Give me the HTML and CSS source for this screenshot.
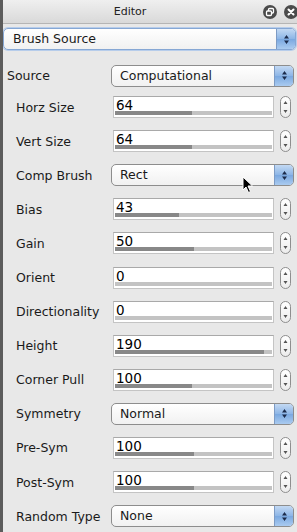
FILE: index.html
```html
<!DOCTYPE html>
<html lang="en">
<head>
  <meta charset="UTF-8" />
  <title>Editor</title>
  <link rel="stylesheet" href="styles.css">
</head>
<body>

<div class="window">
  <div class="titlebar">
    <span class="title">Editor</span>
    <div class="title-icons">
      <svg width="14" height="14" viewBox="0 0 14 14">
        <circle cx="7" cy="7" r="7" fill="#4b4b4b"/>
        <rect x="5.5" y="3.5" width="5" height="4.5" rx="1" fill="none" stroke="#fff" stroke-width="1.3"/>
        <rect x="3.5" y="6" width="5" height="4.5" rx="1" fill="#4b4b4b" stroke="#fff" stroke-width="1.3"/>
      </svg>
      <svg width="14" height="14" viewBox="0 0 14 14">
        <circle cx="7" cy="7" r="7" fill="#4b4b4b"/>
        <path d="M4.5 4.5 L9.5 9.5 M9.5 4.5 L4.5 9.5" stroke="#fff" stroke-width="2" stroke-linecap="round"/>
      </svg>
    </div>
  </div>

  <div class="top">
    <div class="combo focus">
      <span class="combo-text">Brush Source</span>
      <span class="combo-btn">
        <svg width="7" height="11" viewBox="0 0 7 11"><path d="M3.5 1 L6 4.5 H1 Z M3.5 10 L6 6.5 H1 Z" fill="#1c2c4c"/></svg>
      </span>
    </div>
  </div>

  <div class="rows">
    <div class="row first">
      <label>Source</label>
      <div class="combo">
        <span class="combo-text">Computational</span>
        <span class="combo-btn">
          <svg width="7" height="11" viewBox="0 0 7 11"><path d="M3.5 1 L6 4.5 H1 Z M3.5 10 L6 6.5 H1 Z" fill="#1c2c4c"/></svg>
        </span>
      </div>
    </div>

    <div class="row">
      <label class="sub">Horz Size</label>
      <div class="spin">
        <div class="field"><span class="val">64</span><div class="bar"><div class="fill" style="width:49%"></div></div></div>
        <span class="stepper"><svg width="11" height="22" viewBox="0 0 11 22"><path d="M5.5 5 L7.5 8 H3.5 Z M5.5 17 L7.5 14 H3.5 Z" fill="#555"/></svg></span>
      </div>
    </div>

    <div class="row">
      <label class="sub">Vert Size</label>
      <div class="spin">
        <div class="field"><span class="val">64</span><div class="bar"><div class="fill" style="width:49%"></div></div></div>
        <span class="stepper"><svg width="11" height="22" viewBox="0 0 11 22"><path d="M5.5 5 L7.5 8 H3.5 Z M5.5 17 L7.5 14 H3.5 Z" fill="#555"/></svg></span>
      </div>
    </div>

    <div class="row">
      <label class="sub">Comp Brush</label>
      <div class="combo">
        <span class="combo-text">Rect</span>
        <span class="combo-btn">
          <svg width="7" height="11" viewBox="0 0 7 11"><path d="M3.5 1 L6 4.5 H1 Z M3.5 10 L6 6.5 H1 Z" fill="#1c2c4c"/></svg>
        </span>
      </div>
    </div>

    <div class="row">
      <label class="sub">Bias</label>
      <div class="spin">
        <div class="field"><span class="val">43</span><div class="bar"><div class="fill" style="width:41%"></div></div></div>
        <span class="stepper"><svg width="11" height="22" viewBox="0 0 11 22"><path d="M5.5 5 L7.5 8 H3.5 Z M5.5 17 L7.5 14 H3.5 Z" fill="#555"/></svg></span>
      </div>
    </div>

    <div class="row">
      <label class="sub">Gain</label>
      <div class="spin">
        <div class="field"><span class="val">50</span><div class="bar"><div class="fill" style="width:50%"></div></div></div>
        <span class="stepper"><svg width="11" height="22" viewBox="0 0 11 22"><path d="M5.5 5 L7.5 8 H3.5 Z M5.5 17 L7.5 14 H3.5 Z" fill="#555"/></svg></span>
      </div>
    </div>

    <div class="row">
      <label class="sub">Orient</label>
      <div class="spin">
        <div class="field"><span class="val">0</span><div class="bar"><div class="fill" style="width:0%"></div></div></div>
        <span class="stepper"><svg width="11" height="22" viewBox="0 0 11 22"><path d="M5.5 5 L7.5 8 H3.5 Z M5.5 17 L7.5 14 H3.5 Z" fill="#555"/></svg></span>
      </div>
    </div>

    <div class="row">
      <label class="sub">Directionality</label>
      <div class="spin">
        <div class="field"><span class="val">0</span><div class="bar"><div class="fill" style="width:0%"></div></div></div>
        <span class="stepper"><svg width="11" height="22" viewBox="0 0 11 22"><path d="M5.5 5 L7.5 8 H3.5 Z M5.5 17 L7.5 14 H3.5 Z" fill="#555"/></svg></span>
      </div>
    </div>

    <div class="row">
      <label class="sub">Height</label>
      <div class="spin">
        <div class="field"><span class="val">190</span><div class="bar"><div class="fill" style="width:95%"></div></div></div>
        <span class="stepper"><svg width="11" height="22" viewBox="0 0 11 22"><path d="M5.5 5 L7.5 8 H3.5 Z M5.5 17 L7.5 14 H3.5 Z" fill="#555"/></svg></span>
      </div>
    </div>

    <div class="row">
      <label class="sub">Corner Pull</label>
      <div class="spin">
        <div class="field"><span class="val">100</span><div class="bar"><div class="fill" style="width:49%"></div></div></div>
        <span class="stepper"><svg width="11" height="22" viewBox="0 0 11 22"><path d="M5.5 5 L7.5 8 H3.5 Z M5.5 17 L7.5 14 H3.5 Z" fill="#555"/></svg></span>
      </div>
    </div>

    <div class="row">
      <label class="sub">Symmetry</label>
      <div class="combo">
        <span class="combo-text">Normal</span>
        <span class="combo-btn">
          <svg width="7" height="11" viewBox="0 0 7 11"><path d="M3.5 1 L6 4.5 H1 Z M3.5 10 L6 6.5 H1 Z" fill="#1c2c4c"/></svg>
        </span>
      </div>
    </div>

    <div class="row">
      <label class="sub">Pre-Sym</label>
      <div class="spin">
        <div class="field"><span class="val">100</span><div class="bar"><div class="fill" style="width:50%"></div></div></div>
        <span class="stepper"><svg width="11" height="22" viewBox="0 0 11 22"><path d="M5.5 5 L7.5 8 H3.5 Z M5.5 17 L7.5 14 H3.5 Z" fill="#555"/></svg></span>
      </div>
    </div>

    <div class="row">
      <label class="sub">Post-Sym</label>
      <div class="spin">
        <div class="field"><span class="val">100</span><div class="bar"><div class="fill" style="width:50%"></div></div></div>
        <span class="stepper"><svg width="11" height="22" viewBox="0 0 11 22"><path d="M5.5 5 L7.5 8 H3.5 Z M5.5 17 L7.5 14 H3.5 Z" fill="#555"/></svg></span>
      </div>
    </div>

    <div class="row">
      <label class="sub">Random Type</label>
      <div class="combo">
        <span class="combo-text">None</span>
        <span class="combo-btn">
          <svg width="7" height="11" viewBox="0 0 7 11"><path d="M3.5 1 L6 4.5 H1 Z M3.5 10 L6 6.5 H1 Z" fill="#1c2c4c"/></svg>
        </span>
      </div>
    </div>
  </div>

  <!-- mouse pointer over the Comp Brush combo -->
  <svg class="cursor" width="12" height="18" viewBox="0 0 12 18">
    <path d="M1 1 L1 14 L4 11 L6.5 16.5 L8.5 15.5 L6 10 L10.5 10 Z" fill="#000" stroke="#fff" stroke-width="1"/>
  </svg>
</div>

</body>
</html>
```

FILE: styles.css
```css
body {
  margin: 0;
  font-family: 'DejaVu Sans', 'Liberation Sans', sans-serif;
  font-size: 12.5px;
  color: #1a1a1a;
}

.window {
  position: relative;
  width: 297px;
  height: 532px;
  box-sizing: border-box;
  background: #e8e8e8;
  border-left: 3px solid #5c5c5c;
  overflow: hidden;
}

.titlebar {
  height: 24px;
  display: flex;
  align-items: center;
  background: linear-gradient(#efefef, #d9d9d9);
  border-bottom: 1px solid #b5b5b5;
  box-sizing: border-box;
}

.title {
  flex: 1;
  text-align: center;
  padding-right: 6px;
  font-size: 11px;
  color: #222;
}

.title-icons {
  display: flex;
  gap: 7px;
  margin-right: -1px;
}

.top {
  padding: 4px 1px 0 0;
}

.combo {
  display: flex;
  align-items: stretch;
  height: 22px;
  box-sizing: border-box;
  border: 1px solid #8d8d8d;
  border-radius: 5px;
  background: linear-gradient(#ffffff, #f1f1f1);
  overflow: hidden;
}

.combo.focus {
  border-color: #86a7d4;
  box-shadow: 0 0 0 1px #b7cdeb;
}

.combo-text {
  flex: 1;
  padding-left: 8px;
  line-height: 20px;
}

.top .combo-text {
  padding-left: 9px;
}

.combo-btn {
  width: 18px;
  display: flex;
  align-items: center;
  justify-content: center;
  border-left: 1px solid #7d9bc4;
  background: linear-gradient(#c3d9f3, #8cb5e6 50%, #7aa8e0 51%, #aacbf0);
}

.rows {
  margin-top: 11px;
}

.row {
  display: grid;
  grid-template-columns: 104px 1fr;
  align-items: center;
  height: 34.1px;
  padding: 0 3px 0 4px;
}

.row.first {
  height: 29px;
}

.row label {
  white-space: nowrap;
}

.row label.sub {
  padding-left: 9px;
}

.spin {
  display: flex;
  align-items: center;
  margin-left: 2px;
}

.field {
  position: relative;
  width: 161px;
  height: 22px;
  box-sizing: border-box;
  background: #fff;
  border: 1px solid #c4c4c4;
  border-top-color: #a9a9a9;
}

.val {
  position: absolute;
  left: 2px;
  top: 1px;
  font-size: 13.5px;
  line-height: 14px;
  color: #000;
}

.bar {
  position: absolute;
  left: 1px;
  right: 1px;
  bottom: 2px;
  height: 4px;
  background: #c3c3c3;
}

.fill {
  height: 100%;
  background: #888;
}

.stepper {
  margin-left: 6px;
  width: 11px;
  height: 22px;
  box-sizing: border-box;
  border: 1px solid #8e8e8e;
  border-radius: 6px;
  background: linear-gradient(#fff, #ececec);
  display: flex;
  align-items: center;
  justify-content: center;
  overflow: hidden;
}

.stepper svg {
  flex: none;
}

.cursor {
  position: absolute;
  left: 239px;
  top: 176px;
}
```
